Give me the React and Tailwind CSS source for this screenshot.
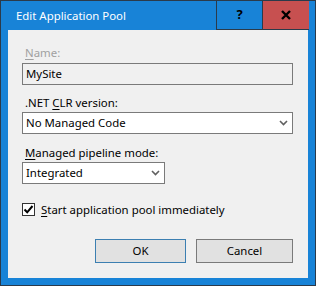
import React from 'react';

const font = { fontFamily: '"Noto Sans", "Open Sans", sans-serif' };

function Chevron() {
  return (
    <svg width="9" height="6" viewBox="0 0 9 6" className="shrink-0">
      <path d="M1 1 L4.5 4.5 L8 1" fill="none" stroke="#606060" strokeWidth="1.6" />
    </svg>
  );
}

function Select({ value, className }) {
  return (
    <div className={`h-[22px] flex items-center justify-between bg-white border border-[#7a7a7a] pl-[3px] pr-[4px] ${className}`}>
      <span className="text-[11.4px] text-black leading-none">{value}</span>
      <Chevron />
    </div>
  );
}

export default function App() {
  return (
    <div
      className="w-[316px] h-[286px] flex flex-col border border-[#2b3a4a] bg-[#1883d7] select-none"
      style={font}
    >
      <div className="h-[29px] flex items-stretch shrink-0">
        <div className="flex-1 flex items-center pl-[15px] text-white text-[11.4px]">Edit Application Pool</div>
        <div className="w-[47px] -mt-px border border-[#2b3a4a] flex items-center justify-center text-black text-[13px] font-bold">?</div>
        <div className="w-[46px] -mt-px mr-[6px] bg-[#c75050] border-y border-[#2b3a4a] flex items-center justify-center">
          <svg width="10" height="10" viewBox="0 0 10 10">
            <path d="M1 1 L9 9 M9 1 L1 9" stroke="#000" strokeWidth="2.4" />
          </svg>
        </div>
      </div>

      <div className="flex-1 mx-[7px] mb-[7px] bg-[#f0f0f0] flex flex-col pl-[14px] pr-[15px] pt-[14px]">
        <div className="text-[11.4px] text-[#a0a0a0] pl-[3px] h-[17px] leading-[17px]">
          <u className="underline-offset-2">N</u>ame:
        </div>
        <div className="mt-[2px] h-[22px] flex items-center border border-[#7a7a7a] bg-[#f0f0f0] pl-[3px] text-[11.4px] text-black">
          MySite
        </div>

        <div className="mt-[9px] text-[11.4px] text-black pl-[3px] h-[17px] leading-[17px]">
          .NET <u className="underline-offset-2">C</u>LR version:
        </div>
        <Select value="No Managed Code" className="mt-[1px] w-full" />

        <div className="mt-[10px] text-[11.4px] text-black pl-[3px] h-[17px] leading-[17px]">
          <u className="underline-offset-2">M</u>anaged pipeline mode:
        </div>
        <Select value="Integrated" className="mt-[1px] w-[143px]" />

        <div className="mt-[19px] flex items-center gap-[6px]">
          <div className="w-[13px] h-[13px] border border-[#333] bg-white flex items-center justify-center">
            <svg width="11" height="11" viewBox="0 0 11 11">
              <path d="M1.5 5.5 L4.2 8.3 L9.5 2" fill="none" stroke="#000" strokeWidth="2" />
            </svg>
          </div>
          <span className="text-[11.4px] text-black leading-none">
            <u className="underline-offset-2">S</u>tart application pool immediately
          </span>
        </div>

        <div className="mt-[23px] flex justify-end gap-[10px]">
          <button className="w-[91px] h-[24px] bg-[#e1e1e1] border border-[#3c7fb1] text-[11.4px] text-black">OK</button>
          <button className="w-[97px] h-[24px] bg-[#e1e1e1] border border-[#7a7a7a] text-[11.4px] text-black">Cancel</button>
        </div>
      </div>
    </div>
  );
}
